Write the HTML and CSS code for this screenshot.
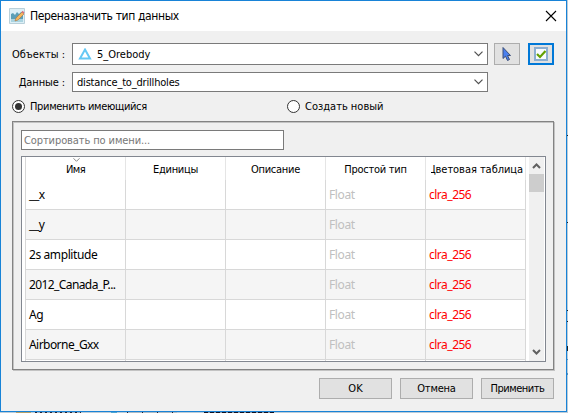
FILE: index.html
```
<!DOCTYPE html>
<html lang="ru">
<head>
<meta charset="utf-8">
<title>Переназначить тип данных</title>
<link rel="stylesheet" href="styles.css">
</head>
<body>
<main class="dialog">
  <header class="titlebar">
    <svg class="app-icon" width="16" height="16" viewBox="0 0 16 16"><path d="M.5.5h15v15H.5z" fill="#dceff6" stroke="#b9d0da"/><path d="M2 6l2-1 2 2 2-3 2 2 2-2 2 1v6H2z" fill="#5c9fb6"/><path d="M2 11h12v3H2z" fill="#a9d3e0"/><path d="M6 13l1-3 6-6 2 2-6 6z" fill="#f5b65e" stroke="#a57644" stroke-width=".6"/><path d="M12.500 4l1-1.300 2 1.800-1.200 1.300z" fill="#d8707b"/></svg>
    <h1><span class="t-title">Переназначить тип данных</span></h1>
    <svg class="close" width="12" height="12" viewBox="0 0 12 12"><path d="M1 1l10 10M11 1L1 11" stroke="#000" stroke-width="1.1"/></svg>
  </header>
  <section class="form">
    <div class="field first">
      <label><span>Объекты :</span></label>
      <div class="combo object">
        <svg width="14" height="12" viewBox="0 0 14 12"><path d="M7 1.600L12 10.500H2z" fill="none" stroke="#64c8f4" stroke-width="2"/></svg>
        <span>5_Orebody</span>
        <svg class="chevron" width="9" height="6" viewBox="0 0 9 6"><path d="M.5.7l4 4 4-4" fill="none" stroke="#505050" stroke-width="1.2"/></svg>
      </div>
      <button class="tool"><svg width="10" height="16" viewBox="0 0 10 16"><path d="M1 1.500v11l2.500-2.300 2 4.300 2-1-2-4H8.500z" fill="#4a80ef" stroke="#3c4f78"/></svg></button>
      <button class="tool focus"><svg width="14" height="14" viewBox="0 0 14 14"><path d="M1 1h12v12H1z" fill="#f8fbfd" stroke="#8caed0" stroke-width="2"/><path d="M3 7l3 3 5.500-6" fill="none" stroke="#63a000" stroke-width="2.200"/></svg></button>
    </div>
    <div class="field second">
      <label><span class="t-data">Данные :</span></label>
      <div class="combo">
        <span class="t-dist">distance_to_drillholes</span>
        <svg class="chevron" width="9" height="6" viewBox="0 0 9 6"><path d="M.5.7l4 4 4-4" fill="none" stroke="#505050" stroke-width="1.2"/></svg>
      </div>
    </div>
    <div class="choices">
      <div class="choice"><i class="radio on"></i><span class="t-use">Применить имеющийся</span></div>
      <div class="choice"><i class="radio"></i><span>Создать новый</span></div>
    </div>
  </section>
  <section class="group">
    <div class="search"><span class="t-search">Сортировать по имени...</span></div>
    <div class="list">
      <div class="grid">
        <div class="row head">
          <div><svg class="sort" width="7" height="4" viewBox="0 0 7 4"><path d="M.5.3l3 3 3-3" fill="none" stroke="#888"/></svg><span class="t-name">Имя</span></div>
          <div><span>Единицы</span></div>
          <div><span>Описание</span></div>
          <div><span>Простой тип</span></div>
          <div><span class="t-clip">Цветовая таблица</span></div>
        </div>
        <div class="row"><div>__x</div><div></div><div></div><div class="type">Float</div><div class="color">clra_256</div></div>
        <div class="row alt"><div>__y</div><div></div><div></div><div class="type">Float</div><div></div></div>
        <div class="row"><div><span class="t-amp">2s amplitude</span></div><div></div><div></div><div class="type">Float</div><div class="color">clra_256</div></div>
        <div class="row alt"><div><span class="t-can">2012_Canada_P...</span></div><div></div><div></div><div class="type">Float</div><div class="color">clra_256</div></div>
        <div class="row"><div>Ag</div><div></div><div></div><div class="type">Float</div><div class="color">clra_256</div></div>
        <div class="row alt"><div><span class="t-air">Airborne_Gxx</span></div><div></div><div></div><div class="type">Float</div><div class="color">clra_256</div></div>
        <div class="row rest"><div></div><div></div><div></div><div></div><div></div></div>
      </div>
      <div class="scroll">
        <svg width="9" height="6" viewBox="0 0 9 6"><path d="M1 5l3.500-3.500L8 5" fill="none" stroke="#606060" stroke-width="2"/></svg>
        <i class="thumb"></i>
        <svg class="down" width="9" height="6" viewBox="0 0 9 6"><path d="M1 1l3.500 3.500L8 1" fill="none" stroke="#606060" stroke-width="2"/></svg>
      </div>
    </div>
  </section>
  <footer>
    <button><span>OK</span></button>
    <button><span class="t-cancel">Отмена</span></button>
    <button><span class="t-apply">Применить</span></button>
  </footer>
</main>
</body>
</html>
```
FILE: styles.css
```
* { box-sizing: border-box; }
body {
  margin: 0; width: 568px; height: 413px; overflow: hidden;
  font: 11px "DejaVu Sans Condensed", "DejaVu Sans", sans-serif; font-stretch: condensed; color: #000;
  /* slivers of the window behind the dialog */
  background:
    linear-gradient(#222, #222) 567px 135px / 1px 1px no-repeat,
    linear-gradient(#222, #222) 567px 222px / 1px 1px no-repeat,
    linear-gradient(#222, #222) 567px 310px / 1px 1px no-repeat,
    linear-gradient(#222, #222) 567px 321px / 1px 1px no-repeat,
    linear-gradient(#222, #222) 567px 346px / 1px 5px no-repeat,
    linear-gradient(#5b8fb8, #5b8fb8) 567px 359px / 1px 1px no-repeat,
    linear-gradient(#5b8fb8, #5b8fb8) 567px 373px / 1px 2px no-repeat,
    linear-gradient(#b5a06a, #b5a06a) 16px 412px / 15px 1px no-repeat,
    repeating-linear-gradient(90deg, #223 0 2px, #9fb0bf 2px 5px) 35px 412px / 46px 1px no-repeat,
    linear-gradient(#4fa5cf, #4fa5cf) 111px 412px / 6px 1px no-repeat,
    repeating-linear-gradient(90deg, #223 0 1px, #aebac4 1px 15px) 127px 412px / 50px 1px no-repeat,
    repeating-linear-gradient(90deg, #112 0 4px, #8a99a6 4px 6px) 204px 412px / 70px 1px no-repeat,
    #bccbd7;
}
.dialog { width: 567px; height: 412px; border: 1px solid #1883d7; background: #f0f0f0; display: flex; flex-direction: column; }
.titlebar { height: 30px; flex: none; background: #fff; display: flex; align-items: center; padding: 0 9px 0 8px; }
h1 { margin: 0 0 0 5px; font-size: 12px; font-weight: normal; white-space: nowrap; }
.close { margin-left: auto; }
span { white-space: nowrap; }
svg { flex: none; display: block; }
.form { height: 90px; flex: none; padding-top: 12px; }
.field { display: flex; }
.first { height: 22px; }
.second { height: 20px; margin-top: 7px; }
label { width: 64px; margin-right: 7px; text-align: right; display: flex; align-items: center; justify-content: flex-end; }
.combo { width: 416px; height: 100%; border: 1px solid #7a7a7a; background: #fff; display: flex; align-items: center; padding: 0 4px 0 3px; }
.object { padding-left: 5px; gap: 5px; }
.chevron { margin-left: auto; }
button { font: inherit; color: inherit; margin: 0; padding: 0; border: 1px solid #adadad; background: #e1e1e1; display: flex; align-items: center; justify-content: center; }
.tool { width: 26px; height: 22px; margin-left: 6px; }
.tool.focus { border: 2px solid #0078d7; margin-left: 8px; }
.choices { display: flex; margin-top: 7px; padding-left: 11px; }
.choice { width: 275px; height: 15px; display: flex; align-items: center; gap: 5px; }
.radio { width: 13px; height: 13px; flex: none; border: 1px solid #333; border-radius: 50%; background: #fff; display: flex; align-items: center; justify-content: center; }
.on::before { content: ""; width: 7px; height: 7px; border-radius: 50%; background: #333; }
.group { width: 542px; height: 249px; flex: none; margin: 0 0 1px 11px; border: 1px solid #838383; box-shadow: 1px 1px #c3c3c3, inset 1px 1px #c3c3c3; padding: 8px; }
.search { width: 263px; height: 20px; border: 1px solid #7a7a7a; background: #fff; color: #777; display: flex; align-items: center; padding-left: 2px; }
.list { width: 525px; height: 206px; margin-top: 6px; border: 1px solid #828790; background: #fff; display: flex; padding-left: 3px; overflow: hidden; }
.grid { width: 501px; border-left: 1px solid #d8d8d8; font: 12px "Noto Sans", sans-serif; letter-spacing: -.4px; }
.row { display: grid; grid-template-columns: repeat(5, 100px); height: 30px; }
.row > div { border-right: 1px solid #d8d8d8; border-bottom: 1px solid #d8d8d8; padding-left: 3px; display: flex; align-items: center; overflow: hidden; }
.alt { background: #f5f5f5; }
.head { height: 23px; font: 11px "DejaVu Sans Condensed", "DejaVu Sans", sans-serif; font-stretch: condensed; letter-spacing: -.25px; }
.head > div { border-bottom: 0; border-color: #e5e5e5; padding: 2px 0 0; justify-content: center; position: relative; }
.sort { position: absolute; top: 1px; left: 47px; }
.row.rest { height: 2px; }
.rest > div { border-bottom: 0; }
.row > .type { color: #c0c0c0; }
.row > .color { color: #f00; letter-spacing: -.5px; }
.scroll { width: 15px; margin-left: 3px; background: #f0f0f0; display: flex; flex-direction: column; align-items: center; padding: 6px 0; }
.thumb { width: 15px; height: 18px; margin-top: 5px; background: #cdcdcd; }
.down { margin-top: auto; }
footer { display: flex; gap: 8px; justify-content: flex-end; padding: 7px 12px 0 0; }
footer button { width: 73px; height: 21px; }
.t-title { letter-spacing: -.37px; }
.t-data { letter-spacing: -.1px; }
.t-dist { letter-spacing: -.19px; padding-left: 1px; }
.t-use { letter-spacing: -.34px; }
.t-search { letter-spacing: -.1px; }
.t-name { letter-spacing: -.6px; }
.t-clip { letter-spacing: -.05px; clip-path: inset(0 0 0 3px); }
.t-amp { letter-spacing: -.4px; }
.t-can { letter-spacing: -.6px; }
.t-air { letter-spacing: -.55px; }
.t-cancel { letter-spacing: -.2px; }
.t-apply { letter-spacing: -.48px; }
```
